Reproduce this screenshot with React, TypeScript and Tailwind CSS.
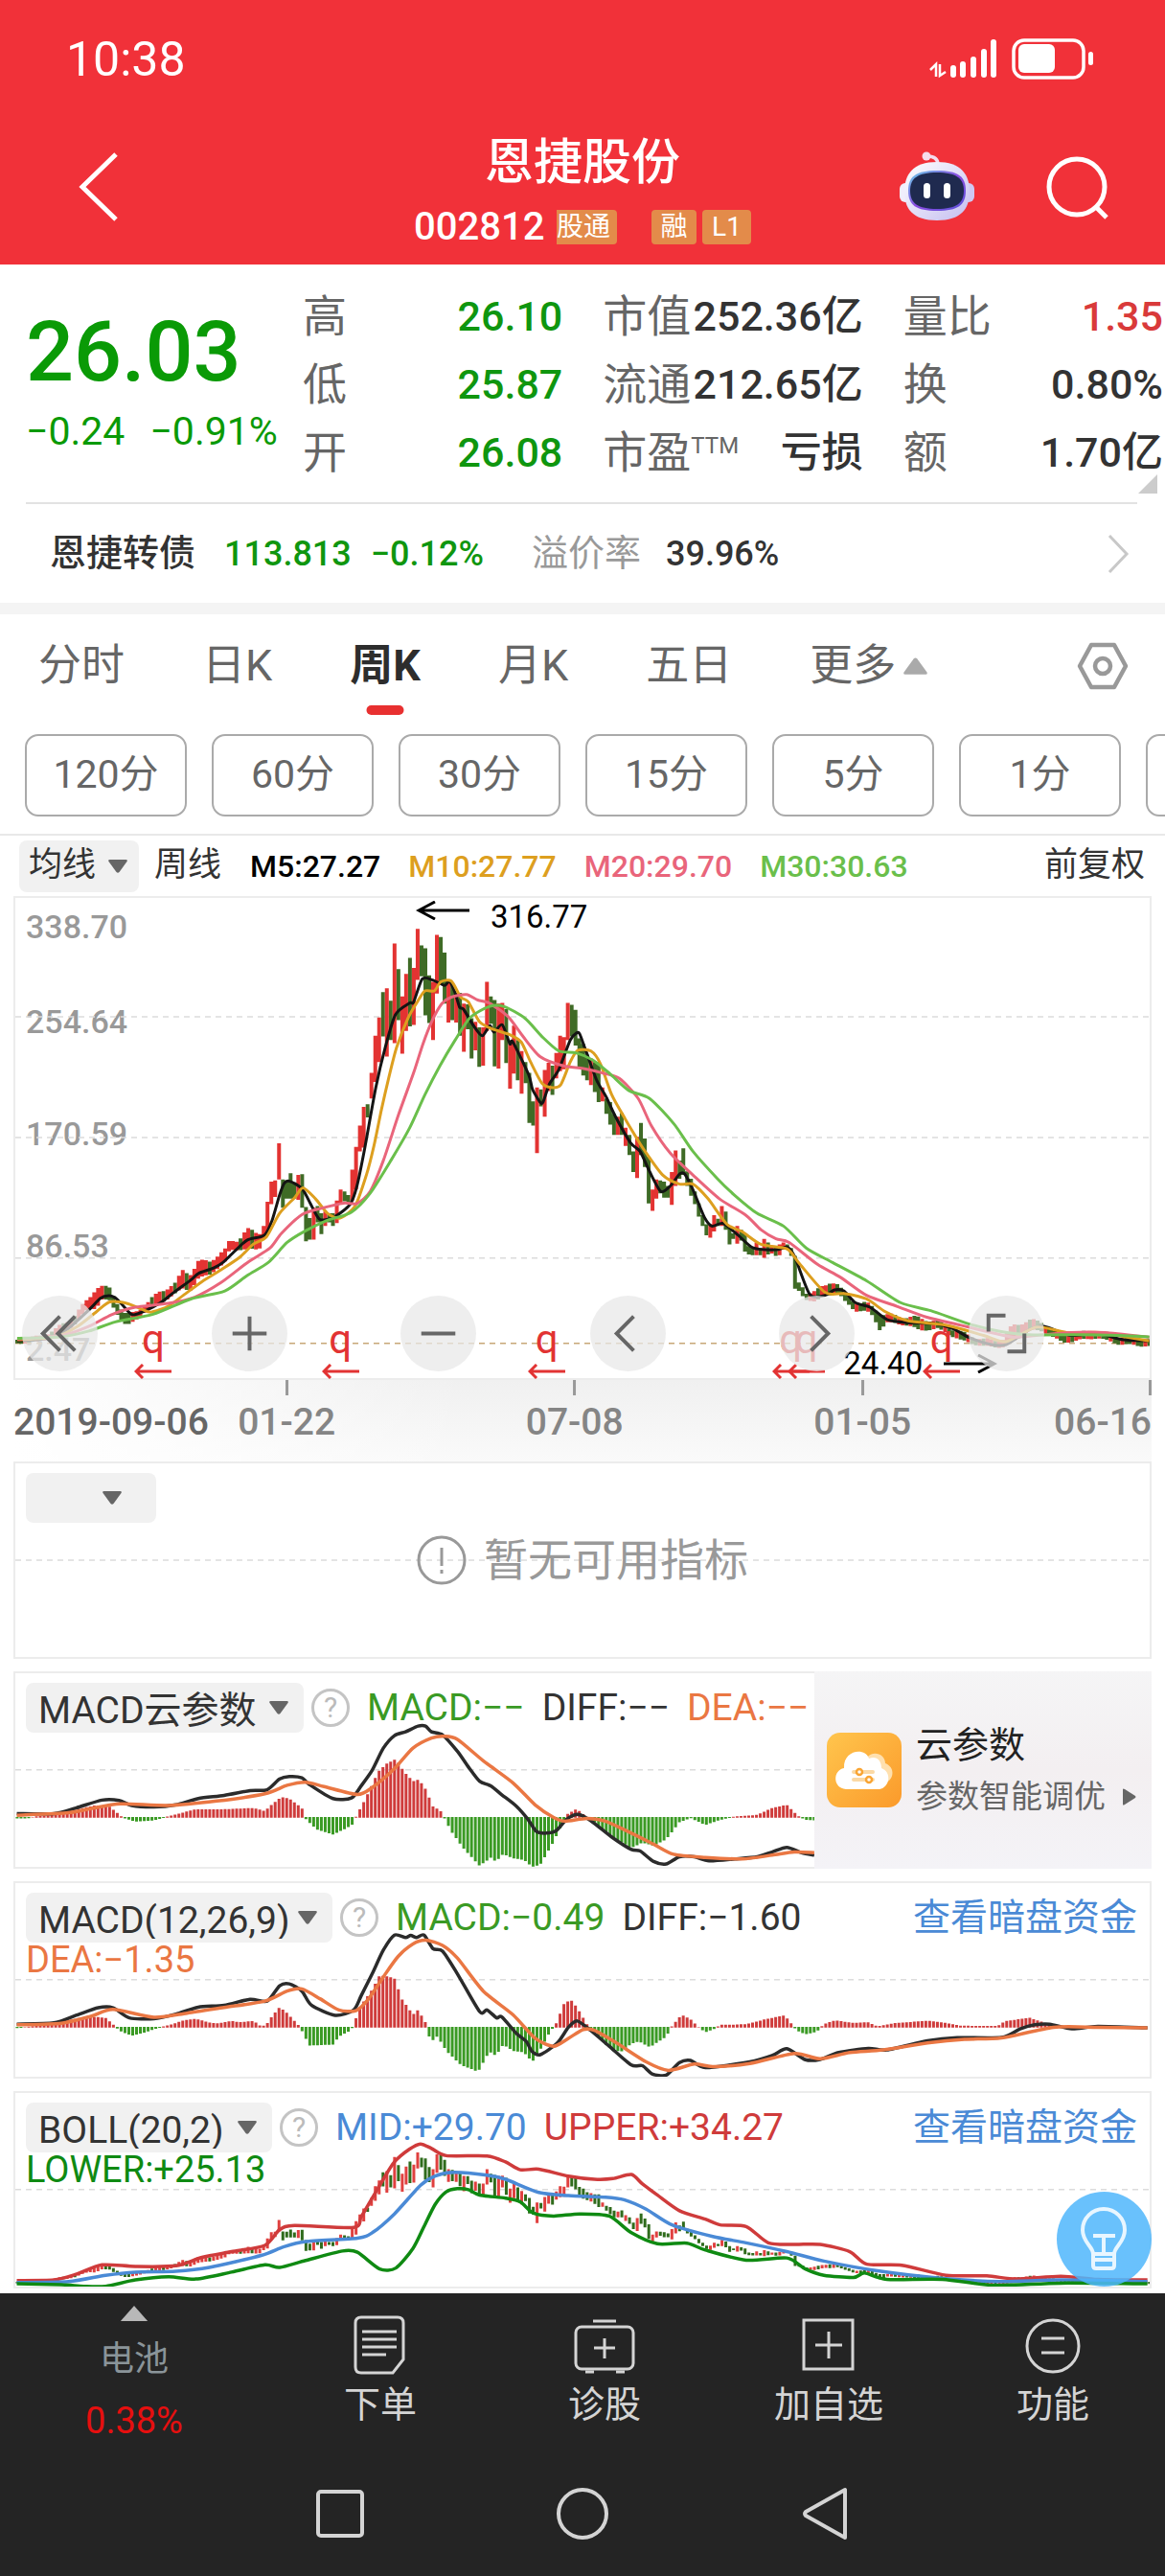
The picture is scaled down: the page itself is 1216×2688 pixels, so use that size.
import type { ReactNode } from "react"

type Point = [number, number]

// Weekly bars: high, low, 1 = up / 0 = down. Values are in chart units, smaller is higher.
type Candle = [number, number, number]

const WEEK = 10.2
const FIRST_X = 40
const WEEKS = 295

// Bars 64..204, where the price moves the most
const activeWeeks: Candle[] = [
  [940, 975, 1], [873, 960, 1], [818, 880, 1], [815, 860, 1], [713, 812, 1], [812, 890, 0], [815, 865, 0], [795, 865, 0],
  [820, 865, 0], [800, 868, 1], [798, 890, 0], [888, 982, 0], [918, 977, 0], [890, 977, 1], [885, 930, 0], [905, 962, 0],
  [900, 940, 1], [905, 930, 0], [905, 940, 0], [870, 932, 1], [840, 880, 1], [845, 872, 0], [855, 875, 0], [785, 870, 1],
  [723, 840, 1], [664, 735, 1], [613, 725, 1], [606, 642, 0], [520, 590, 1], [418, 545, 1], [368, 490, 1], [298, 420, 0],
  [288, 475, 1], [322, 430, 0], [165, 438, 1], [235, 375, 0], [310, 467, 1], [248, 405, 1], [204, 392, 0], [232, 388, 1],
  [125, 265, 1], [170, 255, 0], [178, 362, 0], [252, 383, 0], [270, 430, 1], [141, 302, 1], [147, 275, 0], [190, 330, 0],
  [270, 382, 1], [278, 375, 0], [300, 382, 1], [300, 418, 0], [330, 462, 1], [332, 400, 0], [370, 480, 0], [380, 458, 1],
  [395, 503, 0], [395, 500, 1], [270, 405, 1], [310, 385, 0], [320, 502, 0], [330, 508, 1], [328, 430, 1], [345, 493, 0],
  [440, 563, 1], [390, 522, 1], [430, 540, 0], [460, 577, 1], [490, 548, 0], [520, 657, 0], [598, 664, 0], [560, 740, 1],
  [565, 612, 0], [512, 640, 1], [492, 570, 1], [500, 580, 0], [465, 535, 1], [418, 515, 1], [422, 510, 1], [328, 430, 1],
  [333, 420, 0], [347, 445, 0], [425, 505, 0], [440, 527, 0], [470, 540, 0], [480, 553, 1], [490, 572, 0], [490, 600, 0],
  [560, 598, 1], [590, 632, 0], [600, 662, 0], [632, 690, 0], [640, 690, 1], [630, 690, 0], [670, 720, 1], [690, 745, 0],
  [735, 792, 0], [695, 808, 1], [657, 745, 0], [700, 778, 0], [750, 878, 0], [840, 898, 1], [812, 865, 1], [815, 850, 0],
  [818, 862, 0], [830, 862, 0], [792, 882, 1], [733, 830, 1], [760, 810, 0], [727, 800, 0], [790, 830, 0], [810, 857, 0],
  [845, 880, 0], [878, 914, 0], [910, 940, 0], [935, 965, 0], [935, 972, 1], [910, 955, 1], [920, 940, 0], [885, 940, 1],
  [900, 950, 0], [940, 990, 0], [960, 975, 0], [940, 988, 1], [950, 980, 0], [960, 1010, 0], [995, 1018, 0], [1000, 1020, 0],
  [985, 1020, 1], [1000, 1020, 0], [975, 1027, 1], [985, 1018, 0], [995, 1015, 1], [995, 1022, 0], [990, 1020, 1],
  [985, 1005, 1], [990, 1000, 0], [1000, 1022, 0], [1022, 1112, 0], [1095, 1118, 0], [1108, 1132, 0],
]

// [x, high, low] for the calm stretches on either side
const calmStart = [
  [40, 1252, 1262], [90, 1246, 1258], [140, 1225, 1242], [190, 1188, 1212], [230, 1138, 1165], [250, 1108, 1165], [262, 1105, 1142],
  [285, 1112, 1145], [310, 1158, 1190], [330, 1185, 1214], [350, 1178, 1202], [380, 1155, 1172], [420, 1118, 1150], [460, 1098, 1125],
  [478, 1062, 1112], [500, 1070, 1115], [520, 1038, 1085], [550, 1035, 1072], [590, 1008, 1042], [603, 980, 1005], [625, 978, 1004],
  [650, 950, 1005], [680, 960, 1003], [700, 940, 975],
]
const calmEnd = [
  [2100, 1110, 1135], [2124, 1122, 1138], [2155, 1118, 1148], [2180, 1105, 1130], [2197, 1090, 1128], [2215, 1100, 1122], [2230, 1125, 1145],
  [2260, 1148, 1172], [2290, 1152, 1174], [2310, 1165, 1190], [2323, 1178, 1225], [2345, 1184, 1205], [2400, 1190, 1212], [2430, 1192, 1226],
  [2480, 1203, 1222], [2540, 1232, 1254], [2600, 1252, 1270], [2650, 1252, 1272], [2675, 1215, 1260], [2720, 1198, 1226], [2755, 1205, 1228],
  [2810, 1238, 1260], [2900, 1228, 1246], [2960, 1243, 1264], [3040, 1253, 1270],
]

function between(points: number[][], x: number, column: number) {
  const next = points.findIndex((point) => point[0] >= x)
  if (next <= 0) return points[next === 0 ? 0 : points.length - 1][column]
  const a = points[next - 1]
  const b = points[next]
  return a[column] + ((b[column] - a[column]) * (x - a[0])) / (b[0] - a[0])
}

const candles = Array.from({ length: WEEKS }, (_, i) => {
  const x = FIRST_X + i * WEEK
  const active = activeWeeks[i - 64]
  if (active) return { x, high: active[0], low: active[1], up: active[2] === 1 }
  const source = i < 64 ? calmStart : calmEnd
  const middle = (between(source, x, 1) + between(source, x, 2)) / 2
  const before = (between(source, x - WEEK, 1) + between(source, x - WEEK, 2)) / 2
  const wobble = Math.sin(i * 7.3) * 5
  return {
    x,
    high: between(source, x, 1) + wobble,
    low: between(source, x, 2) + wobble / 2,
    up: before - middle + Math.sin(i * 4.1) * 9 > 0,
  }
})

const ma5: Point[] = [
  [40, 1255], [120, 1248], [170, 1225], [235, 1165], [260, 1138], [283, 1131], [300, 1137], [320, 1158], [345, 1183], [380, 1172],
  [420, 1150], [455, 1122], [500, 1088], [520, 1070], [560, 1055], [585, 1040], [620, 1005], [650, 978], [695, 965], [715, 925],
  [735, 855], [748, 822], [762, 817], [795, 838], [820, 885], [842, 922], [880, 915], [922, 880], [940, 830], [960, 730],
  [990, 560], [1015, 450], [1042, 360], [1080, 328], [1090, 326], [1113, 262], [1140, 265], [1172, 280], [1185, 268], [1200, 300],
  [1212, 340], [1222, 345], [1250, 392], [1272, 418], [1292, 390], [1303, 408], [1325, 388], [1345, 440], [1353, 435], [1395, 525],
  [1405, 565], [1425, 600], [1433, 600], [1450, 550], [1475, 510], [1505, 430], [1522, 410], [1530, 413], [1545, 455], [1575, 540],
  [1600, 585], [1625, 640], [1665, 712], [1690, 735], [1715, 790], [1745, 845], [1770, 830], [1795, 797], [1808, 797], [1830, 840],
  [1860, 915], [1880, 940], [1910, 933], [1950, 965], [1990, 1000], [2050, 1005], [2080, 998], [2100, 1025], [2140, 1128], [2180, 1130],
  [2205, 1115], [2230, 1118], [2260, 1150], [2300, 1163], [2345, 1197], [2400, 1205], [2470, 1208], [2520, 1222], [2560, 1245],
  [2620, 1265], [2660, 1265], [2720, 1225], [2760, 1215], [2830, 1240], [2900, 1235], [2970, 1252], [3039, 1255],
]
const ma10: Point[] = [
  [40, 1252], [140, 1245], [200, 1215], [250, 1175], [285, 1148], [330, 1152], [370, 1168], [395, 1176], [440, 1160], [480, 1130],
  [530, 1092], [580, 1060], [630, 1025], [665, 990], [700, 970], [735, 905], [775, 862], [797, 835], [830, 865], [862, 905],
  [895, 918], [935, 885], [965, 800], [985, 720], [1005, 620], [1025, 530], [1045, 450], [1075, 370], [1100, 325], [1120, 295],
  [1145, 295], [1162, 270], [1190, 268], [1215, 312], [1235, 325], [1265, 380], [1300, 400], [1345, 415], [1375, 435], [1400, 490],
  [1430, 548], [1455, 560], [1480, 552], [1505, 490], [1525, 458], [1560, 460], [1585, 495], [1615, 580], [1650, 645], [1670, 680],
  [1700, 730], [1750, 800], [1795, 825], [1830, 825], [1870, 865], [1920, 935], [1960, 955], [2010, 990], [2080, 1003], [2110, 1040],
  [2180, 1122], [2230, 1125], [2290, 1140], [2340, 1175], [2400, 1200], [2500, 1212], [2600, 1240], [2660, 1257], [2740, 1217],
  [2820, 1232], [2910, 1232], [2980, 1245], [3039, 1255],
]
const ma20: Point[] = [
  [40, 1250], [160, 1240], [230, 1215], [290, 1183], [350, 1163], [440, 1152], [510, 1135], [580, 1095], [650, 1040], [710, 1000],
  [740, 960], [795, 908], [850, 890], [905, 877], [940, 878], [975, 845], [1010, 760], [1050, 635], [1090, 520], [1115, 440],
  [1140, 375], [1165, 330], [1190, 312], [1230, 305], [1260, 320], [1290, 328], [1340, 365], [1380, 420], [1425, 475], [1485, 500],
  [1540, 508], [1590, 520], [1635, 535], [1685, 590], [1720, 665], [1770, 740], [1830, 800], [1900, 865], [1970, 910], [2010, 950],
  [2050, 975], [2085, 985], [2160, 1045], [2220, 1080], [2290, 1130], [2370, 1160], [2450, 1190], [2540, 1212], [2620, 1232],
  [2680, 1245], [2740, 1240], [2830, 1232], [2920, 1232], [3039, 1245],
]
const ma30: Point[] = [
  [40, 1248], [160, 1243], [230, 1228], [300, 1203], [400, 1182], [500, 1140], [590, 1118], [650, 1075], [705, 1040], [755, 985],
  [800, 955], [860, 925], [925, 902], [975, 850], [1030, 760], [1080, 670], [1120, 580], [1160, 500], [1200, 430], [1240, 368],
  [1290, 338], [1330, 338], [1385, 370], [1430, 420], [1475, 460], [1520, 465], [1565, 485], [1610, 522], [1660, 568], [1715, 590],
  [1780, 660], [1830, 735], [1895, 810], [1940, 855], [2000, 905], [2070, 940], [2130, 1000], [2200, 1040], [2290, 1090],
  [2380, 1150], [2460, 1172], [2560, 1208], [2640, 1228], [2720, 1238], [2850, 1238], [2960, 1240], [3039, 1244],
]

const cloudBars: Point[] = [
  [20, 503], [35, 503], [45, 497], [75, 490], [100, 475], [125, 462], [145, 465], [158, 490], [163, 501], [180, 513], [205, 510],
  [218, 501], [230, 493], [262, 474], [300, 474], [340, 470], [355, 480], [365, 458], [377, 435], [388, 440], [405, 470], [409, 497],
  [411, 508], [425, 538], [447, 554], [465, 535], [475, 520], [478, 498], [490, 445], [508, 355], [520, 328], [532, 315], [543, 355],
  [555, 385], [563, 380], [572, 410], [582, 465], [592, 478], [597, 500], [607, 545], [622, 595], [645, 654], [660, 628], [667, 640],
  [677, 616], [690, 630], [705, 635], [716, 657], [727, 650], [742, 590], [757, 520], [763, 490], [776, 473], [785, 490], [797, 510],
  [830, 570], [850, 597], [865, 580], [880, 590], [897, 570], [915, 515], [930, 502], [950, 524], [970, 508], [990, 497], [1020, 492],
  [1040, 470], [1060, 460], [1075, 495], [1085, 508], [1097, 509],
]
const cloudDiff: Point[] = [
  [20, 488], [70, 488], [100, 470], [135, 445], [158, 446], [175, 462], [205, 467], [235, 460], [265, 440], [300, 430], [335, 415],
  [358, 412], [375, 378], [388, 370], [405, 374], [415, 395], [447, 440], [472, 438], [485, 400], [500, 350], [515, 280], [530, 240],
  [545, 228], [562, 210], [572, 210], [580, 228], [595, 238], [615, 290], [630, 340], [645, 385], [660, 400], [675, 428], [695, 465],
  [710, 505], [722, 545], [735, 550], [748, 543], [763, 505], [778, 490], [795, 510], [825, 565], [850, 602], [862, 607], [880, 640],
  [897, 648], [915, 625], [935, 625], [955, 638], [990, 632], [1020, 625], [1040, 610], [1060, 595], [1080, 612], [1097, 620],
]
const cloudDea: Point[] = [
  [20, 493], [90, 485], [120, 472], [160, 457], [225, 462], [290, 448], [355, 425], [385, 398], [410, 388], [435, 402], [480, 427],
  [500, 405], [530, 345], [555, 280], [580, 248], [597, 242], [615, 252], [650, 320], [690, 390], [720, 460], [745, 500], [760, 512],
  [790, 503], [815, 512], [850, 550], [880, 585], [907, 617], [950, 627], [1000, 632], [1040, 620], [1070, 610], [1097, 612],
]

const macdBars: Point[] = [
  [20, 503], [35, 498], [60, 492], [85, 480], [105, 470], [127, 467], [140, 470], [152, 495], [158, 510], [175, 527], [195, 515],
  [213, 500], [230, 490], [245, 478], [262, 473], [280, 485], [290, 488], [310, 480], [320, 484], [340, 480], [350, 497], [357, 492],
  [363, 470], [375, 436], [385, 455], [400, 492], [403, 502], [415, 558], [447, 555], [455, 530], [472, 508], [475, 490], [485, 430],
  [500, 380], [510, 335], [520, 338], [530, 345], [540, 410], [555, 460], [562, 445], [572, 485], [577, 530], [583, 542], [588, 528],
  [600, 575], [620, 620], [643, 641], [655, 590], [660, 580], [667, 590], [677, 555], [690, 575], [705, 580], [716, 610], [725, 580],
  [740, 515], [748, 490], [760, 420], [770, 415], [780, 450], [790, 490], [797, 508], [815, 555], [835, 580], [850, 552], [860, 545],
  [875, 563], [897, 530], [905, 495], [918, 460], [930, 475], [940, 498], [950, 516], [962, 505], [970, 492], [985, 492], [1005, 490],
  [1030, 475], [1057, 462], [1065, 485], [1073, 510], [1085, 522], [1100, 515], [1110, 490], [1125, 478], [1150, 486], [1170, 484],
  [1182, 497], [1205, 487], [1250, 479], [1275, 486], [1295, 495], [1345, 496], [1355, 480], [1388, 470], [1410, 487], [1430, 499],
  [1547, 500],
]
const macdDiff: Point[] = [
  [20, 490], [70, 486], [100, 462], [130, 438], [150, 438], [172, 470], [205, 473], [235, 458], [265, 436], [300, 430], [335, 411],
  [358, 417], [375, 368], [388, 362], [405, 385], [418, 430], [450, 462], [475, 445], [485, 400], [500, 330], [515, 255], [530, 207],
  [545, 215], [552, 208], [560, 215], [570, 207], [582, 250], [595, 258], [615, 330], [645, 450], [655, 445], [668, 470], [675, 467],
  [695, 520], [708, 545], [716, 577], [727, 587], [750, 550], [765, 500], [777, 480], [795, 510], [820, 560], [850, 620], [865, 622],
  [878, 648], [897, 652], [915, 612], [930, 605], [950, 628], [1010, 610], [1040, 590], [1060, 568], [1085, 603], [1105, 602],
  [1130, 580], [1170, 567], [1195, 572], [1250, 543], [1290, 533], [1350, 532], [1375, 505], [1395, 492], [1415, 490], [1445, 505],
  [1480, 497], [1547, 502],
]
const macdDea: Point[] = [
  [20, 492], [80, 487], [120, 465], [150, 443], [205, 468], [250, 455], [300, 437], [355, 417], [385, 385], [405, 378], [430, 410],
  [455, 445], [478, 447], [495, 410], [515, 340], [535, 275], [555, 235], [572, 223], [595, 240], [615, 280], [650, 385], [690, 460],
  [720, 535], [745, 560], [765, 535], [785, 507], [800, 510], [830, 550], [870, 610], [900, 637], [935, 617], [960, 625], [1010, 615],
  [1070, 583], [1105, 600], [1145, 580], [1190, 572], [1250, 550], [1300, 538], [1350, 534], [1420, 500], [1480, 500], [1547, 502],
]

const bollUpper: Point[] = [
  [20, 632], [70, 630], [100, 612], [135, 582], [180, 587], [235, 585], [270, 558], [310, 540], [355, 520], [375, 470], [395, 457],
  [475, 463], [485, 430], [500, 370], [515, 310], [530, 255], [550, 215], [565, 198], [580, 212], [600, 235], [655, 236], [680, 255],
  [700, 280], [725, 278], [765, 300], [800, 310], [825, 308], [850, 295], [865, 325], [885, 360], [915, 410], [950, 437], [970, 455],
  [1005, 460], [1035, 512], [1070, 517], [1105, 517], [1145, 540], [1168, 580], [1215, 583], [1275, 615], [1330, 617], [1370, 627],
  [1430, 618], [1480, 628], [1547, 630],
]
const bollMid: Point[] = [
  [20, 638], [90, 635], [140, 615], [180, 605], [235, 602], [280, 590], [350, 552], [380, 525], [410, 508], [480, 497], [500, 480],
  [530, 420], [565, 330], [585, 300], [610, 288], [655, 297], [680, 310], [725, 352], [765, 362], [815, 367], [840, 375], [870, 405],
  [905, 455], [960, 492], [1005, 512], [1060, 540], [1110, 570], [1180, 600], [1270, 625], [1350, 635], [1430, 630], [1547, 635],
]
const bollLower: Point[] = [
  [20, 642], [80, 645], [110, 650], [140, 650], [180, 630], [225, 620], [262, 627], [310, 605], [355, 582], [375, 590], [410, 568],
  [460, 538], [480, 542], [510, 595], [532, 592], [555, 530], [570, 460], [585, 390], [600, 350], [615, 340], [630, 343], [645, 360],
  [680, 370], [700, 382], [718, 418], [745, 427], [780, 420], [820, 427], [850, 480], [885, 515], [925, 513], [950, 535], [1005, 567],
  [1060, 560], [1085, 595], [1110, 615], [1150, 622], [1165, 608], [1195, 628], [1270, 628], [1340, 647], [1430, 640], [1547, 642],
]

// Catmull-Rom through the points
function smooth(points: Point[]) {
  let d = `M${points[0][0]} ${points[0][1]}`
  for (let i = 0; i < points.length - 1; i++) {
    const p0 = points[i - 1] ?? points[i]
    const p1 = points[i]
    const p2 = points[i + 1]
    const p3 = points[i + 2] ?? p2
    d += `C${p1[0] + (p2[0] - p0[0]) / 8} ${p1[1] + (p2[1] - p0[1]) / 8} ${p2[0] - (p3[0] - p1[0]) / 8} ${p2[1] - (p3[1] - p1[1]) / 8} ${p2[0]} ${p2[1]}`
  }
  return d
}

function Line({ points, color, width = 3.5 }: { points: Point[]; color: string; width?: number }) {
  return (
    <path d={smooth(points)} fill="none" stroke={color} strokeWidth={width} strokeLinejoin="round" vectorEffect="non-scaling-stroke" />
  )
}

function Sticks({ d, color, width }: { d: string; color: string; width: number }) {
  return <path d={d} fill="none" stroke={color} strokeWidth={width} vectorEffect="non-scaling-stroke" />
}

function Guide({ y, from, to, color = "#dcdcdc" }: { y: number; from: number; to: number; color?: string }) {
  return (
    <path d={`M${from} ${y}H${to}`} stroke={color} strokeWidth="1.5" strokeDasharray="6 5" vectorEffect="non-scaling-stroke" />
  )
}

function candlePath(up: boolean, scaleX = 1, offsetX = 0, scaleY = 1, offsetY = 0) {
  return candles
    .filter((candle) => candle.up === up)
    .map((c) => `M${c.x * scaleX + offsetX} ${c.high * scaleY + offsetY}V${c.low * scaleY + offsetY}`)
    .join("")
}

function PriceChart() {
  return (
    <svg viewBox="35 40 3005 1317" preserveAspectRatio="none" className="absolute inset-0 h-full w-full" aria-hidden="true">
      <Guide y={366} from={35} to={3040} />
      <Guide y={697} from={35} to={3040} />
      <Guide y={1028} from={35} to={3040} />
      <Guide y={1262} from={35} to={3040} color="#c8a878" />
      <Sticks d={candlePath(false)} color="#3f6b26" width={4} />
      <Sticks d={candlePath(true)} color="#e33332" width={4} />
      <Line points={ma5} color="#141414" width={3} />
      <Line points={ma10} color="#dd9f1f" width={3} />
      <Line points={ma20} color="#e9657b" width={3} />
      <Line points={ma30} color="#6abf4b" width={3} />
    </svg>
  )
}

function MacdChart({ bars, diff, dea }: { bars: Point[]; diff: Point[]; dea: Point[] }) {
  const end = bars[bars.length - 1][0]
  const up: string[] = []
  const down: string[] = []
  for (let x = 20.5; x < end; x += 5.2) {
    const y = between(bars, x, 1)
    if (y < 500) up.push(`M${x} 501V${y}`)
    else down.push(`M${x} 499V${Math.max(y, 502)}`)
  }
  return (
    <svg viewBox="18 42 1532 615" preserveAspectRatio="none" className="absolute inset-0 h-full w-full" aria-hidden="true">
      <Guide y={349} from={18} to={1550} />
      <Sticks d={up.join("")} color="#cf3b3b" width={3} />
      <Sticks d={down.join("")} color="#3a9a24" width={3} />
      <Line points={diff} color="#2b2b2b" />
      <Line points={dea} color="#ea7743" />
    </svg>
  )
}

function BollChart() {
  return (
    <svg viewBox="18 36 1532 615" preserveAspectRatio="none" className="absolute inset-0 h-full w-full" aria-hidden="true">
      <Guide y={343} from={18} to={1550} />
      <Sticks d={candlePath(false, 0.51, 0, 0.3655, 179)} color="#2f6b1c" width={3} />
      <Sticks d={candlePath(true, 0.51, 0, 0.3655, 179)} color="#e0403f" width={3} />
      <Line points={bollUpper} color="#cf3b3b" />
      <Line points={bollMid} color="#4a8ad6" />
      <Line points={bollLower} color="#0f8a12" />
    </svg>
  )
}

function Triangle({ className }: { className: string }) {
  return (
    <svg viewBox="0 0 20 14" className={className} fill="currentColor" aria-hidden="true">
      <path d="M1.500 0h17q2 0 1 2l-8 11q-1.500 1.500-3 0L.5 2q-1-2 1-2z" />
    </svg>
  )
}

function Picker({ label, value, className, arrow = "right-4" }: { label: string; value: string; className: string; arrow?: string }) {
  return (
    <span className="relative flex shrink-0 items-center">
      <select aria-label={label} className={`appearance-none rounded-lg bg-[#f1f1f1] pb-1 text-[#333] ${className}`}>
        <option>{value}</option>
      </select>
      <Triangle className={`pointer-events-none absolute h-[14px] w-[20px] text-[#666] ${arrow}`} />
    </span>
  )
}

function Help() {
  return (
    <button aria-label="指标说明" className="-ml-[10px] flex size-10 shrink-0 items-center justify-center rounded-full border-3 border-[#c4c4c4] text-[30px] leading-none text-[#bbb]">
      ?
    </button>
  )
}

function Panel({ children, className = "" }: { children: ReactNode; className?: string }) {
  return <section className={`relative mx-[14px] h-[206px] border-2 border-[#ececec] ${className}`}>{children}</section>
}

function StatusBar() {
  return (
    <div className="flex h-[124px] items-center justify-between pr-[74px] pl-[69px]">
      <span className="text-[50px]">10:38</span>
      <svg viewBox="0 0 172 44" className="h-[44px] w-[172px]" fill="#fff" aria-hidden="true">
        <path d="M7 40V27l-6 6M7 28v11.500M11 27v12l6-4M11 28v11" stroke="#fff" strokeWidth="2.500" fill="none" />
        <rect x="22" y="28" width="6" height="13" rx="3" />
        <rect x="32" y="24" width="6" height="17" rx="3" />
        <rect x="43" y="19" width="6" height="22" rx="3" />
        <rect x="54" y="11" width="6" height="30" rx="3" />
        <rect x="64" y="1" width="6" height="40" rx="3" />
        <rect x="88" y="2" width="73" height="39" rx="11" fill="none" stroke="#fff" strokeWidth="3.500" />
        <rect x="93" y="6" width="38" height="30" rx="6" />
        <rect x="166" y="14" width="5" height="14" rx="2.500" />
      </svg>
    </div>
  )
}

function Robot() {
  return (
    <svg viewBox="0 0 78 74" className="h-[74px] w-[78px]" aria-hidden="true">
      <defs>
        <linearGradient id="shell" x1="0" y1="0" x2="1" y2="1">
          <stop offset="0" stopColor="#fff" />
          <stop offset="0.600" stopColor="#dcd8f6" />
          <stop offset="1" stopColor="#c4bdf0" />
        </linearGradient>
        <linearGradient id="visor" x1="0" y1="0" x2="1" y2="1">
          <stop offset="0" stopColor="#67cfe6" />
          <stop offset="0.500" stopColor="#8a4be0" />
          <stop offset="1" stopColor="#5a53d8" />
        </linearGradient>
      </defs>
      <path d="M29 5q11 0 11 9" fill="none" stroke="#f3dcee" strokeWidth="3.500" />
      <circle cx="28" cy="5" r="4.500" fill="#f6dcec" />
      <rect x="0" y="33" width="12" height="20" rx="6" fill="#f0eefc" />
      <rect x="66" y="33" width="12" height="20" rx="6" fill="#cfc8f2" />
      <path d="M39 11c25 0 34 13 34 31s-9 30-34 30S5 60 5 42s9-31 34-31z" fill="url(#shell)" />
      <path d="M39 20c22 0 30 6 30 21s-8 21-30 21S9 56 9 41s8-21 30-21z" fill="url(#visor)" />
      <path d="M39 22c20 0 28 6 28 19s-8 19-28 19-28-6-28-19 8-19 28-19z" fill="#1f2a4f" />
      <rect x="25" y="33" width="7" height="16" rx="3.500" fill="#fff" />
      <rect x="46" y="33" width="7" height="16" rx="3.500" fill="#fff" />
    </svg>
  )
}

function Header() {
  return (
    <header className="bg-[#f13139] text-white">
      <StatusBar />
      <div className="grid h-[152px] grid-cols-[1fr_auto_1fr] items-start">
        <button aria-label="返回" className="mt-[34px] ml-[80px] w-fit">
          <svg viewBox="0 0 44 74" className="h-[74px] w-[44px]" fill="none" stroke="#fff" strokeWidth="5">
            <path d="M41 3 6 37l35 34" />
          </svg>
        </button>
        <div className="flex flex-col items-center">
          <h1 className="mt-[11px] text-[51px] leading-[70px] font-medium">恩捷股份</h1>
          <div className="flex items-center leading-[64px]">
            <span className="w-[149px] text-[40px] font-medium">002812</span>
            <span className="mr-[36px] h-[36px] w-[63px] overflow-hidden rounded-r bg-[#e38b4a] text-[28px] leading-[36px]">股通</span>
            <span className="mr-[6px] h-[36px] w-[47px] rounded bg-[#e38b4a] text-center text-[28px] leading-[36px]">融</span>
            <span className="h-[36px] w-[51px] rounded bg-[#e38b4a] text-center text-[28px] leading-[36px]">L1</span>
          </div>
        </div>
        <div className="mt-[34px] flex items-center justify-end gap-[73px] pr-[58px]">
          <button aria-label="智能助手">
            <Robot />
          </button>
          <button aria-label="搜索">
            <svg viewBox="0 0 68 68" className="size-[68px]" fill="none" stroke="#fff" strokeWidth="5">
              <circle cx="34" cy="34" r="29" />
              <path d="m53 54 12 12" />
            </svg>
          </button>
        </div>
      </div>
    </header>
  )
}

const quoteRows = [
  [
    { label: "高", value: "26.10", color: "text-[#0f960f]" },
    { label: "市值", value: "252.36亿", color: "text-[#333]" },
    { label: "量比", value: "1.35", color: "text-[#d93a3a]" },
  ],
  [
    { label: "低", value: "25.87", color: "text-[#0f960f]" },
    { label: "流通", value: "212.65亿", color: "text-[#333]" },
    { label: "换", value: "0.80%", color: "text-[#333]" },
  ],
  [
    { label: "开", value: "26.08", color: "text-[#0f960f]" },
    { label: "市盈", note: "TTM", value: "亏损", color: "text-[#333]" },
    { label: "额", value: "1.70亿", color: "text-[#333]" },
  ],
]

function Quote() {
  return (
    <section className="relative flex pt-[19px] pb-[16px]">
      <div className="w-[316px] shrink-0 pl-[27px] whitespace-nowrap text-[#0a9a06]">
        <div className="mt-[22px] text-[88px] leading-[100px] font-medium">26.03</div>
        <div className="flex gap-[26px] text-[41px] leading-[66px]">
          <span>−0.24</span>
          <span>−0.91%</span>
        </div>
      </div>
      <dl className="grid flex-1 grid-cols-3 gap-x-[42px] pr-[2px]">
        {quoteRows.flat().map((cell) => (
          <div key={cell.label} className="flex justify-between leading-[71px] whitespace-nowrap">
            <dt className="flex text-[46px] text-[#666]">
              {cell.label}
              {cell.note && <span className="text-[24px] leading-[56px]">{cell.note}</span>}
            </dt>
            <dd className={`text-[43px] font-medium ${cell.color}`}>{cell.value}</dd>
          </div>
        ))}
      </dl>
      <svg viewBox="0 0 20 20" className="absolute right-[8px] bottom-[9px] size-[20px]" fill="#ccc" aria-hidden="true">
        <path d="M20 0v20H0z" />
      </svg>
    </section>
  )
}

function BondRow() {
  return (
    <a href="#bond" className="mr-[29px] ml-[27px] flex h-[105px] items-center border-t-2 border-[#e2e2e2] pr-[8px] pl-[25px] text-[36px] text-[#333]">
      <span className="mr-[30px] text-[38px] font-medium">恩捷转债</span>
      <span className="mr-[20px] font-medium text-[#0f960f]">113.813</span>
      <span className="mr-[50px] font-medium text-[#0f960f]">−0.12%</span>
      <span className="mr-[26px] text-[38px] text-[#999]">溢价率</span>
      <span className="font-medium">39.96%</span>
      <svg viewBox="0 0 24 42" className="ml-auto h-[42px] w-[24px]" fill="none" stroke="#c8c8c8" strokeWidth="3" aria-hidden="true">
        <path d="m3 2 18 19L3 40" />
      </svg>
    </a>
  )
}

const tabs = ["分时", "日K", "周K", "月K", "五日"]
const minutes = ["120分", "60分", "30分", "15分", "5分", "1分", ""]

function PeriodTabs() {
  return (
    <>
      <nav className="box-content flex h-[108px] items-center gap-[81px] border-t-12 border-[#f4f4f4] pr-[38px] pl-[40px] text-[45px] text-[#666]">
        {tabs.map((tab) =>
          tab === "周K" ? (
            <button key={tab} className="relative h-full shrink-0 font-bold text-[#2d2d2d]">
              {tab}
              <span className="absolute bottom-[3px] left-1/2 h-[10px] w-[39px] -translate-x-1/2 rounded-full bg-[#e83030]" />
            </button>
          ) : (
            <button key={tab} className="h-full shrink-0">
              {tab}
            </button>
          ),
        )}
        <button className="flex shrink-0 items-center gap-[8px]">
          更多
          <Triangle className="h-[18px] w-[25px] rotate-180 text-[#aaa]" />
        </button>
        <button aria-label="设置" className="ml-auto">
          <svg viewBox="0 0 54 50" className="h-[50px] w-[54px]" fill="none" stroke="#999" strokeWidth="4.500" strokeLinejoin="round">
            <path d="M15 3h24l12 22-12 22H15L3 25z" />
            <circle cx="27" cy="25" r="8" />
          </svg>
        </button>
      </nav>
      <div className="mt-[17px] flex gap-[26px] overflow-hidden pl-[26px]">
        {minutes.map((minute, index) => (
          <button
            key={index}
            aria-label={minute || "更多分钟"}
            className="h-[86px] w-[169px] shrink-0 rounded-[14px] border-2 border-[#aaa] text-[41px] text-[#666]"
          >
            {minute}
          </button>
        ))}
      </div>
    </>
  )
}

function AverageRow() {
  return (
    <div className="mt-[18px] flex h-[65px] items-center border-t-2 border-[#e8e8e8] pr-[21px] pl-[20px] text-[32px] font-medium whitespace-nowrap">
      <Picker label="主图指标" value="均线" className="h-[54px] w-[125px] pl-[10px] text-[35px] font-normal" arrow="right-3" />
      <span className="ml-[16px] text-[35px] font-normal text-[#333]">周线</span>
      <span className="ml-[30px] text-black">M5:27.27</span>
      <span className="ml-[29px] text-[#dd9f1f]">M10:27.77</span>
      <span className="ml-[29px] text-[#e9657b]">M20:29.70</span>
      <span className="ml-[29px] text-[#6abf4b]">M30:30.63</span>
      <button className="ml-auto text-[35px] font-normal text-[#333]">前复权</button>
    </div>
  )
}

function ReportMark({ className }: { className: string }) {
  return (
    <span className={`absolute top-[441px] flex w-[39px] flex-col items-center text-[42px] leading-[40px] text-[#e23333] ${className}`}>
      q
      <svg viewBox="0 0 39 16" className="mt-[5px] h-[16px] w-[39px]" fill="none" stroke="currentColor" strokeWidth="3" aria-hidden="true">
        <path d="M39 8H2M9 1 2 8l7 7" />
      </svg>
    </span>
  )
}

const controls = [
  { label: "后退一屏", d: "M40 22 22 40l18 18M56 22 38 40l18 18" },
  { label: "放大", d: "M40 22v36M22 40h36" },
  { label: "缩小", d: "M22 40h36" },
  { label: "左移", d: "M46 22 28 40l18 18" },
  { label: "右移", d: "m34 22 18 18-18 18" },
  { label: "全屏", d: "M21 38V21h18M41 59h18V40" },
]

function MainChart() {
  return (
    <section className="relative mx-[14px] h-[505px] border-2 border-[#ececec] text-[34px] leading-[40px]">
      <div className="absolute inset-x-[11px] inset-y-0 font-medium text-[#999]">
        <span className="absolute top-[10px] left-0">338.70</span>
        <span className="absolute top-[109px] left-0">254.64</span>
        <span className="absolute top-[226px] left-0">170.59</span>
        <span className="absolute top-[343px] left-0">86.53</span>
        <span className="absolute top-[451px] left-0">2.47</span>
      </div>
      <PriceChart />
      <div className="absolute top-0 left-[35.300%] flex items-center gap-[22px] text-[33px] text-black">
        <svg viewBox="0 0 56 20" className="mb-[14px] h-[20px] w-[56px]" fill="none" stroke="#000" strokeWidth="3" aria-hidden="true">
          <path d="M56 10H3M20 1 3 10l17 9" />
        </svg>
        316.77
      </div>
      <ReportMark className="left-[10.500%]" />
      <ReportMark className="left-[27%]" />
      <ReportMark className="left-[45.200%]" />
      <ReportMark className="left-[66.700%]" />
      <ReportMark className="left-[68.100%]" />
      <ReportMark className="left-[80%]" />
      <div className="absolute top-[466px] left-[73%] flex items-center gap-[22px] text-[33px] text-black">
        24.40
        <svg viewBox="0 0 56 20" className="h-[20px] w-[56px]" fill="none" stroke="#000" strokeWidth="3" aria-hidden="true">
          <path d="M0 10h53M36 1l17 9-17 9" />
        </svg>
      </div>
      <div className="absolute top-[415px] right-[110px] left-[7px] flex justify-between">
        {controls.map((control) => (
          <button key={control.label} aria-label={control.label} className="size-[79px] rounded-full bg-[#e8e8e8]/75">
            <svg viewBox="0 0 80 80" className="size-full" fill="none" stroke="#666" strokeWidth="4">
              <path d={control.d} />
            </svg>
          </button>
        ))}
      </div>
    </section>
  )
}

function AxisTick({ date, className }: { date: string; className: string }) {
  return (
    <span className={`absolute top-0 flex -translate-x-1/2 flex-col items-center ${className}`}>
      <span className="mb-[8px] h-[16px] w-[3px] bg-[#999]" />
      {date}
    </span>
  )
}

function DateAxis() {
  return (
    <div className="relative mx-[14px] h-[85px] bg-linear-to-b from-[#f0f0f0] to-[#fafafa] text-[39px] leading-[40px] font-medium text-[#858585]">
      <div className="absolute inset-y-0 left-0 w-[40%] bg-linear-to-r from-white to-transparent" />
      <span className="absolute top-[24px] left-0 text-[#666]">2019-09-06</span>
      <AxisTick date="01-22" className="left-[24%]" />
      <AxisTick date="07-08" className="left-[49.300%]" />
      <AxisTick date="01-05" className="left-[74.600%]" />
      <span className="absolute top-0 right-0 flex flex-col items-end">
        <span className="mb-[8px] h-[16px] w-[3px] bg-[#999]" />
        06-16
      </span>
    </div>
  )
}

function EmptyPanel() {
  return (
    <Panel>
      <svg viewBox="0 0 100 100" preserveAspectRatio="none" className="absolute inset-0 h-full w-full" aria-hidden="true">
        <Guide y={50} from={0} to={100} />
      </svg>
      <div className="absolute top-[10px] left-[11px]">
        <Picker label="副图指标" value="" className="h-[52px] w-[136px]" arrow="right-9" />
      </div>
      <div className="relative flex h-full items-center justify-center gap-[18px] text-[46px] text-[#999]">
        <svg viewBox="0 0 52 52" className="size-[52px]" fill="none" stroke="#999" strokeWidth="3" aria-hidden="true">
          <circle cx="26" cy="26" r="24" />
          <path d="M26 13v19M26 36v4" />
        </svg>
        暂无可用指标
      </div>
    </Panel>
  )
}

function CloudPromo() {
  return (
    <a
      href="#cloud"
      className="absolute -inset-y-0.5 -right-0.5 flex w-[352px] items-center gap-[15px] bg-linear-to-b from-[#f5f5f6] via-[#f3eff1] to-[#f4f3f7] pl-[13px]"
    >
      <svg viewBox="0 0 78 78" className="size-[78px]" aria-hidden="true">
        <defs>
          <linearGradient id="cloud-tile" x1="0" y1="0" x2="1" y2="1">
            <stop offset="0" stopColor="#ffc54d" />
            <stop offset="1" stopColor="#fb9a2b" />
          </linearGradient>
        </defs>
        <rect width="78" height="78" rx="14" fill="url(#cloud-tile)" />
        <path d="M42 26c6-8 19-4 19 6 11 4 9 18 0 20H40z" fill="#ffe0ae" />
        <path d="M20 59C6 58 6 39 18 37c-1-19 22-22 26-10 8-3 13 2 13 10 11 4 9 20-2 22z" fill="#fff" />
        <path d="M28 41h20M28 49h20" stroke="#fbd9a5" strokeWidth="4" strokeLinecap="round" />
        <circle cx="34" cy="41" r="3" fill="#fff" stroke="#f9a534" strokeWidth="2.500" />
        <circle cx="44" cy="49" r="3" fill="#fff" stroke="#f9a534" strokeWidth="2.500" />
      </svg>
      <span className="flex flex-col pt-[2px] leading-[54px]">
        <span className="text-[38px] text-[#222]">云参数</span>
        <span className="flex items-center gap-[18px] text-[33px] text-[#666]">
          参数智能调优
          <svg viewBox="0 0 14 18" className="h-[18px] w-[14px]" fill="#666" aria-hidden="true">
            <path d="M0 1q0-1 2 0l11 7q1 1 0 2L2 17q-2 1-2 0z" />
          </svg>
        </span>
      </span>
    </a>
  )
}

function IndicatorHead({ children }: { children: ReactNode }) {
  return <div className="relative flex h-[52px] items-center gap-[18px] text-[39px] whitespace-nowrap">{children}</div>
}

function FundsLink() {
  return (
    <a href="#funds" className="ml-auto text-[39px] text-[#4a8ad6]">
      查看暗盘资金
    </a>
  )
}

function Indicators() {
  return (
    <div className="flex flex-col gap-[13px]">
      <EmptyPanel />
      <Panel className="pt-[10px] pl-[11px]">
        <MacdChart bars={cloudBars} diff={cloudDiff} dea={cloudDea} />
        <IndicatorHead>
          <Picker label="副图指标二" value="MACD云参数" className="h-[52px] w-[290px] pl-[13px]" />
          <Help />
          <span className="text-[#3a9a24]">MACD:−−</span>
          <span className="text-[#333]">DIFF:−−</span>
          <span className="text-[#ea7743]">DEA:−−</span>
        </IndicatorHead>
        <CloudPromo />
      </Panel>
      <Panel className="pt-[10px] pr-[13px] pl-[11px]">
        <MacdChart bars={macdBars} diff={macdDiff} dea={macdDea} />
        <IndicatorHead>
          <Picker label="副图指标三" value="MACD(12,26,9)" className="h-[52px] w-[320px] pl-[13px]" />
          <Help />
          <span className="text-[#3a9a24]">MACD:−0.49</span>
          <span className="text-[#333]">DIFF:−1.60</span>
          <FundsLink />
        </IndicatorHead>
        <div className="relative text-[38px] leading-[36px] text-[#ea7743]">DEA:−1.35</div>
      </Panel>
      <Panel className="pt-[10px] pr-[13px] pl-[11px]">
        <BollChart />
        <IndicatorHead>
          <Picker label="副图指标四" value="BOLL(20,2)" className="h-[52px] w-[257px] pl-[13px]" />
          <Help />
          <span className="text-[#4a8ad6]">MID:+29.70</span>
          <span className="text-[#cf3b3b]">UPPER:+34.27</span>
          <FundsLink />
        </IndicatorHead>
        <div className="relative text-[38px] leading-[36px] text-[#0f8a12]">LOWER:+25.13</div>
        <button aria-label="提示" className="absolute -right-0.5 bottom-0 size-[99px] rounded-full bg-[#4fb6fb]/85">
          <svg viewBox="0 0 99 99" className="size-full" fill="none" stroke="#e8f6ff" strokeWidth="4">
            <path d="M38 65c0-8-11-12-11-25a22 22 0 0 1 44 0c0 13-11 17-11 25v12q0 3-3 3H41q-3 0-3-3zM38 71h22M38 65h22M38 46h23M49 47v18" />
          </svg>
        </button>
      </Panel>
    </div>
  )
}

const actions = [
  {
    label: "下单",
    icon: (
      <>
        <path d="M8 1h38q6 0 6 6v38L41 59H8q-6 0-6-6V7q0-6 6-6z" />
        <path d="M9 16h36M9 24h36M9 32h36M9 40h25" />
      </>
    ),
  },
  {
    label: "诊股",
    icon: (
      <>
        <rect x="-2" y="11" width="60" height="44" rx="6" />
        <path d="M16 5h24M28 23v21M17 33h22M8 58h9M40 58h9" />
      </>
    ),
  },
  {
    label: "加自选",
    icon: (
      <>
        <rect x="2" y="4" width="51" height="51" />
        <path d="M28 16v28M14 30h28" />
      </>
    ),
  },
  {
    label: "功能",
    icon: (
      <>
        <circle cx="28" cy="31" r="27" />
        <path d="M16 23h24M16 38h24" />
      </>
    ),
  },
]

function BottomBar() {
  return (
    <footer className="mt-[5px] bg-[#242424] pb-[39px] text-[#d4d4d4]">
      <nav className="flex h-[165px] text-[38px]">
        <a href="#sector" className="flex w-[280px] flex-col items-center">
          <svg viewBox="0 0 30 17" className="mt-[13px] h-[17px] w-[30px]" fill="#b8b8b8" aria-hidden="true">
            <path d="M15 0 30 17H0z" />
          </svg>
          <span className="mt-[8px] text-[36px] leading-[64px] text-[#8a9499]">电池</span>
          <span className="leading-[64px] text-[#e60f0f]">0.38%</span>
        </a>
        {actions.map((action) => (
          <a key={action.label} href={`#${action.label}`} className="flex flex-1 flex-col items-center">
            <svg viewBox="0 0 56 60" className="mt-[24px] h-[60px] w-[56px] overflow-visible" fill="none" stroke="currentColor" strokeWidth="3" aria-hidden="true">
              {action.icon}
            </svg>
            <span className="leading-[64px]">{action.label}</span>
          </a>
        ))}
      </nav>
      <div className="mt-[37px] flex justify-center gap-[197px]">
        <button aria-label="最近任务">
          <svg viewBox="0 0 56 56" className="size-[56px]" fill="none" stroke="currentColor" strokeWidth="4">
            <rect x="5" y="5" width="46" height="46" rx="3" />
          </svg>
        </button>
        <button aria-label="主屏幕">
          <svg viewBox="0 0 56 56" className="size-[56px]" fill="none" stroke="currentColor" strokeWidth="4">
            <circle cx="28" cy="28" r="25" />
          </svg>
        </button>
        <button aria-label="后退">
          <svg viewBox="0 0 56 56" className="size-[56px]" fill="none" stroke="currentColor" strokeWidth="4" strokeLinejoin="round">
            <path d="M49 3v50L8 30q-2-2 0-4z" />
          </svg>
        </button>
      </div>
    </footer>
  )
}

export default function App() {
  return (
    <main className="overflow-hidden bg-white font-['Roboto','Noto_Sans_CJK_SC',sans-serif]">
      <Header />
      <Quote />
      <BondRow />
      <PeriodTabs />
      <AverageRow />
      <MainChart />
      <DateAxis />
      <Indicators />
      <BottomBar />
    </main>
  )
}
